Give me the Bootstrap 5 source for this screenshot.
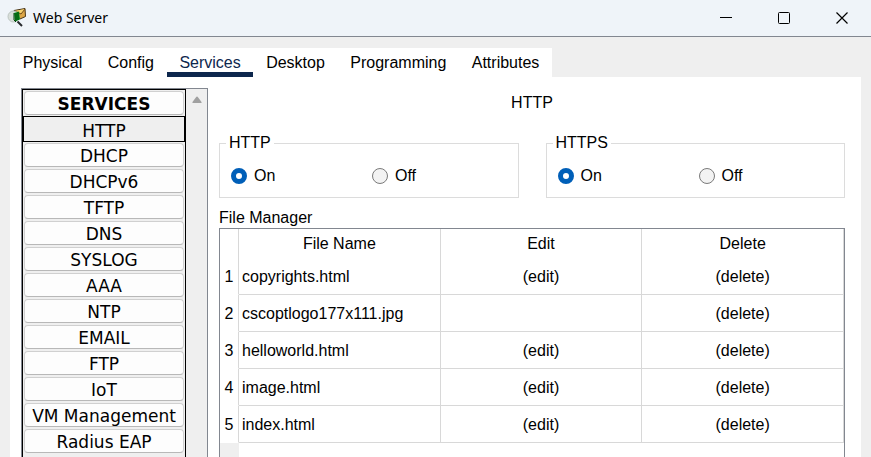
<!DOCTYPE html>
<html lang="en">
<head>
<meta charset="utf-8">
<meta name="viewport" content="width=device-width, initial-scale=1">
<title>Web Server</title>
<link href="https://cdn.jsdelivr.net/npm/bootstrap@5.3.0/dist/css/bootstrap.min.css" rel="stylesheet">
<style>
body { font: 16px/20px "Liberation Sans", Arial, sans-serif; color: #000; background: #efefef; }
.titlebar { height: 37px; background: #eff4f9; border-bottom: 1px solid #828790; padding-left: 7px; }
.titlebar h1 { font: 14px/20px "Noto Sans", "Open Sans", sans-serif; margin-left: 6px; }
.win-btn { width: 58px; height: 34px; border: 0; background: none; padding: 0; display: flex; align-items: center; justify-content: center; }
.workspace { padding: 11px 10px 0; }
.tabs { width: 542px; max-width: 100%; background: #fff; }
.tabs .nav-link { color: #000; padding: 5px 12px 0; height: 29px; border-radius: 0; border-bottom: 5px solid transparent; text-align: center; white-space: nowrap; line-height: 20px; }
.tabs .nav-link.active { color: #0d274d; border-bottom-color: #0d274d; }
.sheet { padding: 11px 16px 0 11px; background: #fff; gap: 11px; }
.services { flex: 0 0 187px; border: 1px solid #828790; border-bottom: 0; background: #efefef; }
.service-list { border: 1px solid #000; border-bottom: 0; }
.service { display: block; width: 100%; height: 26px; padding: 0; border: 1px solid #efefef; background: #efefef; }
.service span { display: block; height: 24px; border: 1px solid #d0d0d0; border-bottom-color: #b8b8b8; border-radius: 4px; background: #fdfdfd; font: 17px/25px "DejaVu Sans", Verdana, sans-serif; text-align: center; color: #000; }
.service-head span { font-weight: 700; }
.service.current { border: 1px solid #000; }
.service.current span { background: none; border-color: transparent; line-height: 27px; }
.scroller { width: 21px; padding-top: 7px; }
.page-title { font-size: 16px; line-height: 20px; padding-top: 5px; margin-bottom: 20px; }
.switches { gap: 27px; }
.switch-box { flex: 1 1 0; border: 1px solid #dcdcdc; height: 65px; padding: 0 11px; }
.switch-box legend { font-size: 16px; line-height: 20px; padding: 0 3px; margin: 0 0 0 -5px; }
.choice { gap: 7px; padding-top: 12px; line-height: 22px; }
.choice:first-child { width: 141px; }
.choice .form-check-input { width: 16px; height: 16px; margin: 0; border: 1px solid #7a7a7a; background-color: #f3f3f3; box-shadow: none; }
.choice .form-check-input:checked { border: 5px solid #005fb8; background: #fff; }
.files-title { font-size: 16px; line-height: 20px; margin: 10px 0 0; }
.files { border: 1px solid #828790; border-bottom: 0; }
.files table { table-layout: fixed; border-collapse: separate; border-spacing: 0; }
.files col.number { width: 19px; }
.files th, .files td { font-weight: 400; text-align: center; padding: 0; border-right: 1px solid #d8d8d8; }
.files thead th { height: 29px; }
.files tbody th, .files tbody td { height: 37px; padding-top: 2px; border-bottom: 1px solid #d8d8d8; }
.files tbody th { border-bottom-color: transparent; }
.files tbody td:nth-child(2) { text-align: left; padding-left: 3px; }
.files a { color: #000; text-decoration: none; }
.gutter { width: 19px; background: #efefef; }
</style>
<script src="https://cdn.jsdelivr.net/npm/bootstrap@5.3.0/dist/js/bootstrap.bundle.min.js"></script>
</head>
<body class="vh-100 overflow-hidden d-flex flex-column">
<header class="titlebar flex-shrink-0 d-flex align-items-center">
  <svg width="20" height="22" viewBox="0 0 20 22" aria-hidden="true">
    <path d="M7 3.500 18 1.500 18.500 9.500 13 12z" fill="#dca647" stroke="#493719"/>
    <path d="m8 4 6 3 4-5" fill="#f5d26f" stroke="#6d4a19"/>
    <circle cx="6.500" cy="9.500" r="5.500" fill="#d9dfda" stroke="#bcc5c1"/>
    <path d="m7 6 5-1.500 1 8-5 2z" fill="#0a9a1c"/>
    <path d="M7 6v7l2 2m0-9v8m2-9v8" stroke="#033d0b" fill="none"/>
    <path d="m10.500 14.500 4.500 4.500" stroke="#272a2e" stroke-width="2"/>
  </svg>
  <h1 class="mb-0">Web Server</h1>
  <div class="ms-auto d-flex">
    <button class="win-btn" type="button" aria-label="Minimize"><svg width="12" height="12"><path d="M0 5.5h12" stroke="#000"/></svg></button>
    <button class="win-btn" type="button" aria-label="Maximize"><svg width="12" height="12"><rect x=".5" y=".5" width="11" height="11" rx="1" fill="none" stroke="#000"/></svg></button>
    <button class="win-btn" type="button" aria-label="Close"><svg width="12" height="12"><path d="m.5.5 11 11m0-11-11 11" stroke="#000" stroke-width="1.2"/></svg></button>
  </div>
</header>
<div class="workspace flex-grow-1 d-flex flex-column overflow-hidden">
  <ul class="tabs nav flex-nowrap flex-shrink-0">
    <li class="nav-item flex-grow-1"><a class="nav-link" href="#">Physical</a></li>
    <li class="nav-item flex-grow-1"><a class="nav-link" href="#">Config</a></li>
    <li class="nav-item flex-grow-1"><a class="nav-link active" aria-current="page" href="#">Services</a></li>
    <li class="nav-item flex-grow-1"><a class="nav-link" href="#">Desktop</a></li>
    <li class="nav-item flex-grow-1"><a class="nav-link" href="#">Programming</a></li>
    <li class="nav-item flex-grow-1"><a class="nav-link" href="#">Attributes</a></li>
  </ul>
  <div class="sheet d-flex flex-grow-1 overflow-hidden">
    <aside class="services d-flex">
      <nav class="service-list flex-grow-1" aria-label="Services">
        <button class="service service-head" type="button"><span>SERVICES</span></button>
        <button class="service current" type="button"><span>HTTP</span></button>
        <button class="service" type="button"><span>DHCP</span></button>
        <button class="service" type="button"><span>DHCPv6</span></button>
        <button class="service" type="button"><span>TFTP</span></button>
        <button class="service" type="button"><span>DNS</span></button>
        <button class="service" type="button"><span>SYSLOG</span></button>
        <button class="service" type="button"><span>AAA</span></button>
        <button class="service" type="button"><span>NTP</span></button>
        <button class="service" type="button"><span>EMAIL</span></button>
        <button class="service" type="button"><span>FTP</span></button>
        <button class="service" type="button"><span>IoT</span></button>
        <button class="service" type="button"><span>VM Management</span></button>
        <button class="service" type="button"><span>Radius EAP</span></button>
      </nav>
      <div class="scroller d-flex justify-content-center align-items-start"><svg width="10" height="8"><path d="M4 1.2Q5-.4 6 1.2L9.5 6Q9.8 7 9 7H1Q.2 7 .5 6z" fill="#a0a0a0"/></svg></div>
    </aside>
    <main class="flex-grow-1 d-flex flex-column">
      <h2 class="page-title text-center">HTTP</h2>
      <div class="switches d-flex">
        <fieldset class="switch-box">
          <legend class="float-none w-auto">HTTP</legend>
          <div class="d-flex">
            <div class="choice d-flex align-items-center"><input class="form-check-input" type="radio" name="http" id="http-on" checked><label for="http-on">On</label></div>
            <div class="choice d-flex align-items-center"><input class="form-check-input" type="radio" name="http" id="http-off"><label for="http-off">Off</label></div>
          </div>
        </fieldset>
        <fieldset class="switch-box">
          <legend class="float-none w-auto">HTTPS</legend>
          <div class="d-flex">
            <div class="choice d-flex align-items-center"><input class="form-check-input" type="radio" name="https" id="https-on" checked><label for="https-on">On</label></div>
            <div class="choice d-flex align-items-center"><input class="form-check-input" type="radio" name="https" id="https-off"><label for="https-off">Off</label></div>
          </div>
        </fieldset>
      </div>
      <h3 class="files-title">File Manager</h3>
      <div class="files flex-grow-1 d-flex flex-column">
        <table class="w-100">
          <colgroup><col class="number"><col><col><col></colgroup>
          <thead><tr><th></th><th scope="col">File Name</th><th scope="col">Edit</th><th scope="col">Delete</th></tr></thead>
          <tbody>
            <tr><th scope="row">1</th><td>copyrights.html</td><td><a href="#">(edit)</a></td><td><a href="#">(delete)</a></td></tr>
            <tr><th scope="row">2</th><td>cscoptlogo177x111.jpg</td><td></td><td><a href="#">(delete)</a></td></tr>
            <tr><th scope="row">3</th><td>helloworld.html</td><td><a href="#">(edit)</a></td><td><a href="#">(delete)</a></td></tr>
            <tr><th scope="row">4</th><td>image.html</td><td><a href="#">(edit)</a></td><td><a href="#">(delete)</a></td></tr>
            <tr><th scope="row">5</th><td>index.html</td><td><a href="#">(edit)</a></td><td><a href="#">(delete)</a></td></tr>
          </tbody>
        </table>
        <div class="gutter flex-grow-1"></div>
      </div>
    </main>
  </div>
</div>
</body>
</html>
